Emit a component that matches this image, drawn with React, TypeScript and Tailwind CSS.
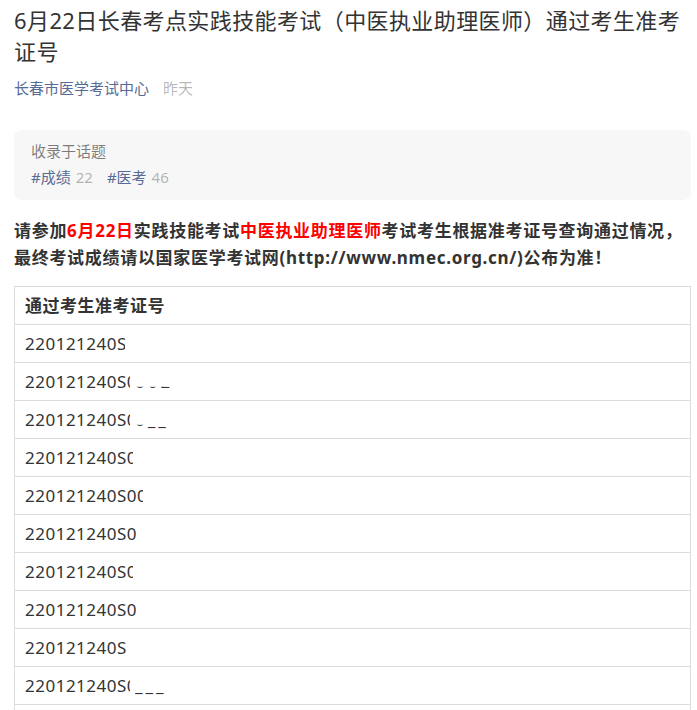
import React from "react";

const rows = [
  { text: "220121240S0", w: 100 },
  { text: "220121240S0", w: 105, frag: "002" },
  { text: "220121240S0", w: 105, frag: "0__" },
  { text: "220121240S0", w: 108 },
  { text: "220121240S00", w: 118 },
  { text: "220121240S0", w: 116 },
  { text: "220121240S0", w: 108 },
  { text: "220121240S0", w: 111 },
  { text: "220121240S0", w: 102 },
  { text: "220121240S0", w: 105, frag: "___" },
  { text: "220121240S0", w: 105 },
];

export default function App() {
  return (
    <div
      className="w-[697px] bg-white pl-[14px] pr-[6px] pt-[5px] pb-6 text-[#333]"
      style={{ fontFamily: '"Noto Sans", "Noto Sans CJK SC", sans-serif' }}
    >
      {/* Title */}
      <h1 className="text-[22px] leading-[31px] font-normal text-[#333] tracking-[0.4px]">
        6月22日长春考点实践技能考试（中医执业助理医师）通过考生准考证号
      </h1>

      {/* Meta */}
      <div className="mt-[11px] flex items-center text-[15px] leading-[20px]">
        <span className="text-[#576b95]">长春市医学考试中心</span>
        <span className="ml-[14px] text-black/30">昨天</span>
      </div>

      {/* Topic box */}
      <div className="mt-[32px] rounded-lg bg-[#f7f7f7] px-[17px] pt-[8px] pb-[10px] text-[15px] leading-[26px]">
        <div className="text-black/50">收录于话题</div>
        <div className="flex">
          <span className="text-[#576b95]">#成绩</span>
          <span className="ml-[5px] text-black/30">22</span>
          <span className="ml-[14px] text-[#576b95]">#医考</span>
          <span className="ml-[5px] text-black/30">46</span>
        </div>
      </div>

      {/* Body */}
      <p className="mt-[17px] text-[17px] leading-[27.2px] font-bold tracking-[0.7px] text-[#333]">
        请参加<span className="text-[#ff0000]">6月22日</span>实践技能考试
        <span className="text-[#ff0000]">中医执业助理医师</span>
        考试考生根据准考证号查询通过情况，最终考试成绩请以国家医学考试网(http://www.nmec.org.cn/)公布为准！
      </p>

      {/* Table */}
      <table className="mt-[15px] w-full border-collapse text-[17px] leading-[27px] tracking-[0.5px]">
        <thead>
          <tr>
            <th className="border border-[#dcdcdc] px-[10px] py-[5px] text-left font-bold">
              通过考生准考证号
            </th>
          </tr>
        </thead>
        <tbody>
          {rows.map((r, i) => (
            <tr key={i}>
              <td className="border border-[#dcdcdc] px-[10px] py-[5px]">
                <div className="flex items-start">
                  <span
                    className="inline-block overflow-hidden whitespace-nowrap"
                    style={{ width: r.w }}
                  >
                    {r.text}
                  </span>
                  {r.frag && (
                    <span className="ml-[5px] whitespace-nowrap tracking-[3px] [clip-path:inset(68%_0_0_0)]">
                      {r.frag}
                    </span>
                  )}
                </div>
              </td>
            </tr>
          ))}
        </tbody>
      </table>
    </div>
  );
}
